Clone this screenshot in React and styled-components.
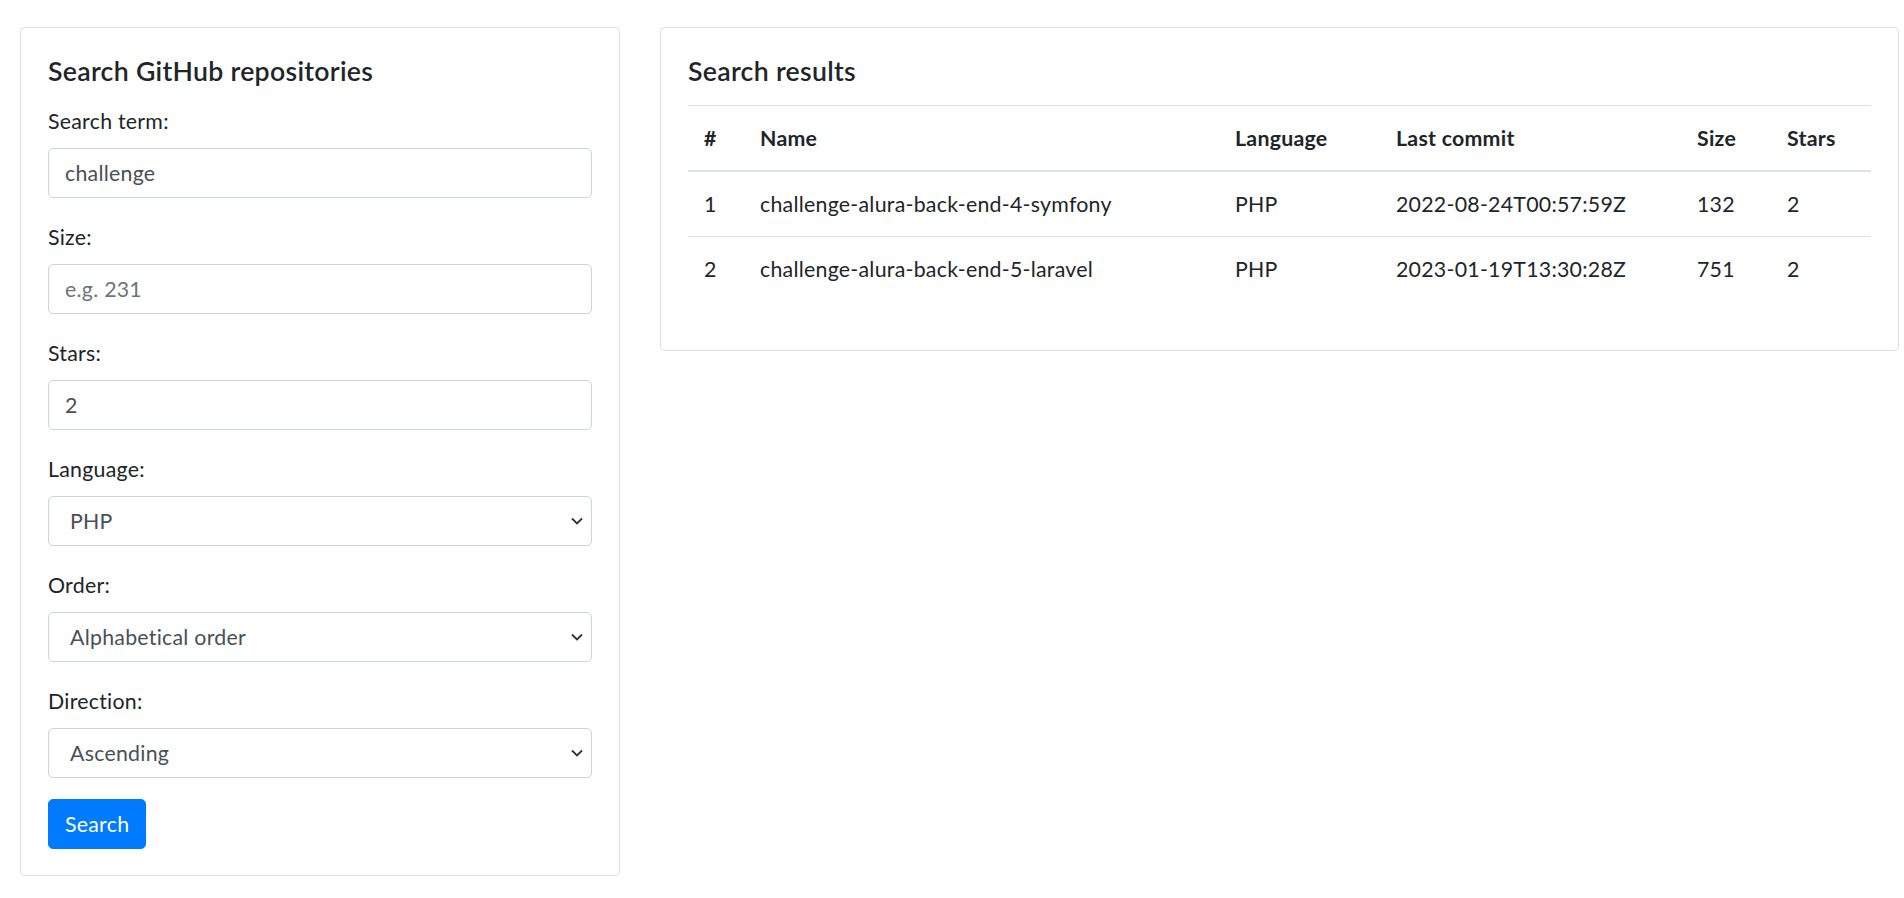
import React, { useState } from 'react';
import styled, { createGlobalStyle } from 'styled-components';

const GlobalStyle = createGlobalStyle`
  html, body {
    margin: 0;
    padding: 0;
    background: #fff;
  }
  body {
    font-family: Lato, "Liberation Sans", sans-serif;
    font-size: 21.33px;
    line-height: 32px;
    letter-spacing: 0.25px;
    color: #212529;
  }
  * {
    box-sizing: border-box;
  }
`;

const Page = styled.div`
  display: grid;
  grid-template-columns: 600px 1fr;
  column-gap: 40px;
  align-items: start;
  padding: 27px 5px 0 20px;
`;

const Card = styled.section`
  background: #fff;
  border: 1px solid rgba(0, 0, 0, 0.125);
  border-radius: 5px;
  padding: 27px 27px 26px;
`;

const CardTitle = styled.h5`
  margin: 0 0 18px;
  font-size: 26.67px;
  line-height: 32px;
  font-weight: 600;
  letter-spacing: 0.3px;
  color: #212529;
`;

const FormGroup = styled.div`
  margin-bottom: 23px;

  &:last-of-type {
    margin-bottom: 21px;
  }
`;

const Label = styled.label`
  display: block;
  margin-bottom: 11px;
  line-height: 32px;
`;

const fieldBase = `
  display: block;
  width: 100%;
  height: 50px;
  padding: 8px 16px;
  font-family: Lato, "Liberation Sans", sans-serif;
  font-size: 21.33px;
  line-height: 32px;
  letter-spacing: 0.25px;
  color: #495057;
  background-color: #fff;
  border: 1px solid #ced4da;
  border-radius: 5px;
  outline: none;
`;

const Input = styled.input`
  ${fieldBase}

  &::placeholder {
    color: #6c757d;
    opacity: 1;
  }
`;

const chevron =
  "url(\"data:image/svg+xml,%3Csvg xmlns='http://www.w3.org/2000/svg' width='12' height='8' viewBox='0 0 12 8'%3E%3Cpath d='M1 1.5l5 5 5-5' fill='none' stroke='%23333' stroke-width='1.8'/%3E%3C/svg%3E\")";

const Select = styled.select`
  ${fieldBase}
  padding-left: 21px;
  appearance: none;
  background-image: ${chevron};
  background-repeat: no-repeat;
  background-position: right 8px center;
  background-size: 12px 8px;
`;

const Button = styled.button`
  display: inline-block;
  padding: 8px 16px;
  font-family: Lato, "Liberation Sans", sans-serif;
  font-size: 21.33px;
  line-height: 32px;
  letter-spacing: 0.25px;
  color: #fff;
  background-color: #007bff;
  border: 1px solid #007bff;
  border-radius: 5px;
  cursor: pointer;
`;

const Table = styled.table`
  width: 100%;
  table-layout: fixed;
  border-collapse: collapse;
  margin-bottom: 23px;
  color: #212529;
`;

const Th = styled.th`
  padding: 16px;
  text-align: left;
  font-weight: 700;
  vertical-align: bottom;
  border-top: 1px solid #dee2e6;
  border-bottom: 2px solid #dee2e6;
`;

const Td = styled.td`
  padding: 16px;
  vertical-align: top;
  border-top: 1px solid #dee2e6;
  white-space: nowrap;
`;

const columns = [
  { key: 'id', label: '#', width: 56 },
  { key: 'name', label: 'Name', width: 475 },
  { key: 'language', label: 'Language', width: 161 },
  { key: 'commit', label: 'Last commit', width: 301 },
  { key: 'size', label: 'Size', width: 90 },
  { key: 'stars', label: 'Stars', width: 100 },
];

const results = [
  { id: 1, name: 'challenge-alura-back-end-4-symfony', language: 'PHP', commit: '2022-08-24T00:57:59Z', size: 132, stars: 2 },
  { id: 2, name: 'challenge-alura-back-end-5-laravel', language: 'PHP', commit: '2023-01-19T13:30:28Z', size: 751, stars: 2 },
];

const App = () => {
  const [term, setTerm] = useState('challenge');
  const [size, setSize] = useState('');
  const [stars, setStars] = useState('2');
  const [language, setLanguage] = useState('PHP');
  const [order, setOrder] = useState('name');
  const [direction, setDirection] = useState('asc');

  return (
    <>
      <GlobalStyle />
      <Page>
        <Card>
          <CardTitle>Search GitHub repositories</CardTitle>
          <form onSubmit={(e) => e.preventDefault()}>
            <FormGroup>
              <Label htmlFor="term">Search term:</Label>
              <Input id="term" type="text" value={term} onChange={(e) => setTerm(e.target.value)} />
            </FormGroup>
            <FormGroup>
              <Label htmlFor="size">Size:</Label>
              <Input id="size" type="text" placeholder="e.g. 231" value={size} onChange={(e) => setSize(e.target.value)} />
            </FormGroup>
            <FormGroup>
              <Label htmlFor="stars">Stars:</Label>
              <Input id="stars" type="text" value={stars} onChange={(e) => setStars(e.target.value)} />
            </FormGroup>
            <FormGroup>
              <Label htmlFor="language">Language:</Label>
              <Select id="language" value={language} onChange={(e) => setLanguage(e.target.value)}>
                <option value="PHP">PHP</option>
                <option value="JavaScript">JavaScript</option>
                <option value="Python">Python</option>
              </Select>
            </FormGroup>
            <FormGroup>
              <Label htmlFor="order">Order:</Label>
              <Select id="order" value={order} onChange={(e) => setOrder(e.target.value)}>
                <option value="name">Alphabetical order</option>
                <option value="stars">Stars</option>
                <option value="updated">Last commit</option>
              </Select>
            </FormGroup>
            <FormGroup>
              <Label htmlFor="direction">Direction:</Label>
              <Select id="direction" value={direction} onChange={(e) => setDirection(e.target.value)}>
                <option value="asc">Ascending</option>
                <option value="desc">Descending</option>
              </Select>
            </FormGroup>
            <Button type="submit">Search</Button>
          </form>
        </Card>

        <Card>
          <CardTitle>Search results</CardTitle>
          <Table>
            <colgroup>
              {columns.map((c) => (
                <col key={c.key} style={{ width: c.width }} />
              ))}
            </colgroup>
            <thead>
              <tr>
                {columns.map((c) => (
                  <Th key={c.key}>{c.label}</Th>
                ))}
              </tr>
            </thead>
            <tbody>
              {results.map((r) => (
                <tr key={r.id}>
                  {columns.map((c) => (
                    <Td key={c.key}>{r[c.key]}</Td>
                  ))}
                </tr>
              ))}
            </tbody>
          </Table>
        </Card>
      </Page>
    </>
  );
};

export default App;
